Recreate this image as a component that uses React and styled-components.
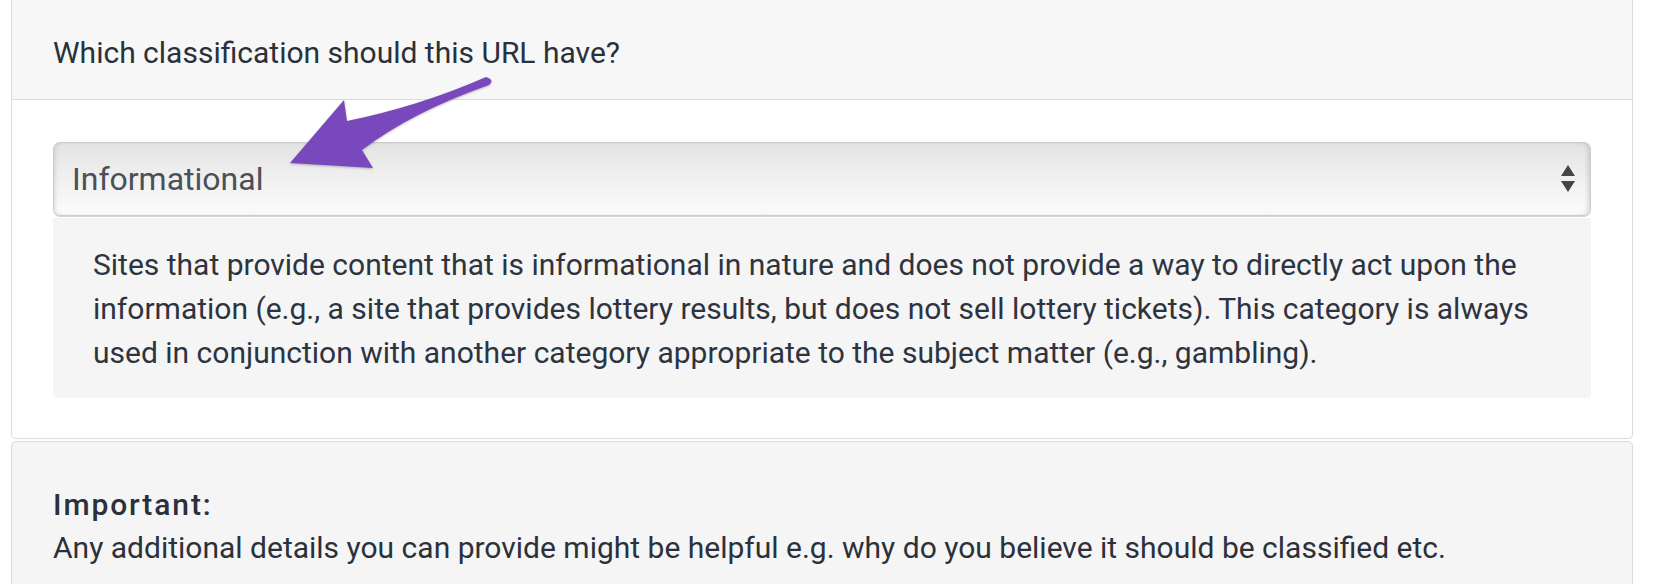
import React from "react";
import styled, { createGlobalStyle } from "styled-components";

const GlobalStyle = createGlobalStyle`
  body {
    margin: 0;
    background: #ffffff;
    font-family: Roboto, "Liberation Sans", sans-serif;
    color: #2b313a;
  }
`;

const Page = styled.div`
  position: relative;
  padding: 0 23px 0 11px;
  height: 584px;
  overflow: hidden;
`;

const Card = styled.section`
  background: #ffffff;
  border: 1px solid #dcdcdc;
  border-top: none;
  border-radius: 0 0 5px 5px;
`;

const CardHeader = styled.div`
  background: #f7f7f7;
  border-bottom: 1px solid #dcdcdc;
  padding: 32px 41px 25px;
  font-size: 30px;
  line-height: 42px;
`;

const CardBody = styled.div`
  padding: 42px 41px 40px;
`;

const SelectBox = styled.div`
  display: flex;
  align-items: center;
  justify-content: space-between;
  height: 72px;
  padding: 0 14px 0 18px;
  border: 1px solid #cbcbcb;
  border-radius: 7px;
  background: linear-gradient(#e3e3e3 0%, #efefef 45%, #fbfbfb 100%);
  box-shadow: inset 3px 0 4px -2px rgba(0, 0, 0, 0.12),
    inset -4px 0 5px -2px rgba(0, 0, 0, 0.14), 0 1px 0 #d6d6d6;
  font-size: 32px;
  color: #4a5058;
`;

const Description = styled.p`
  margin: 2px 0 0;
  padding: 25px 40px 23px;
  background: #f5f5f5;
  border-radius: 0 0 4px 4px;
  font-size: 30px;
  line-height: 44px;
  color: #2d3440;
`;

const Notice = styled.section`
  margin-top: 2px;
  background: #f5f5f5;
  border: 1px solid #dcdcdc;
  border-radius: 5px 5px 0 0;
  padding: 41px 41px 60px;
  font-size: 30px;
  line-height: 43px;
  color: #2b313a;
`;

const NoticeTitle = styled.div`
  font-weight: 500;
  letter-spacing: 1.9px;
`;

const Pointer = styled.svg`
  position: absolute;
  left: 280px;
  top: 68px;
  width: 220px;
  height: 110px;
  filter: drop-shadow(0 1px 1px rgba(0, 0, 0, 0.25));
`;

const Carets = () => (
  <svg width="16" height="30" viewBox="0 0 16 30">
    <path d="M8 1 L15 12 L1 12 Z" fill="#40464c" />
    <path d="M1 17 L15 17 L8 28 Z" fill="#40464c" />
  </svg>
);

export default function App() {
  return (
    <Page>
      <GlobalStyle />
      <Card>
        <CardHeader>Which classification should this URL have?</CardHeader>
        <CardBody>
          <SelectBox>
            <span>Informational</span>
            <Carets />
          </SelectBox>
          <Description>
            Sites that provide content that is informational in nature and does
            not provide a way to directly act upon the information (e.g., a site
            that provides lottery results, but does not sell lottery tickets).
            This category is always used in conjunction with another category
            appropriate to the subject matter (e.g., gambling).
          </Description>
        </CardBody>
      </Card>
      <Notice>
        <NoticeTitle>Important:</NoticeTitle>
        Any additional details you can provide might be helpful e.g. why do you
        believe it should be classified etc.
      </Notice>
      <Pointer viewBox="280 68 220 110">
        <path
          d="M486 77 Q420 106 347 121 L344 100 L290 163 L373 168 L362 150 Q412 112 489 85 Q495 80 486 77 Z"
          fill="#7a48bd"
        />
      </Pointer>
    </Page>
  );
}
